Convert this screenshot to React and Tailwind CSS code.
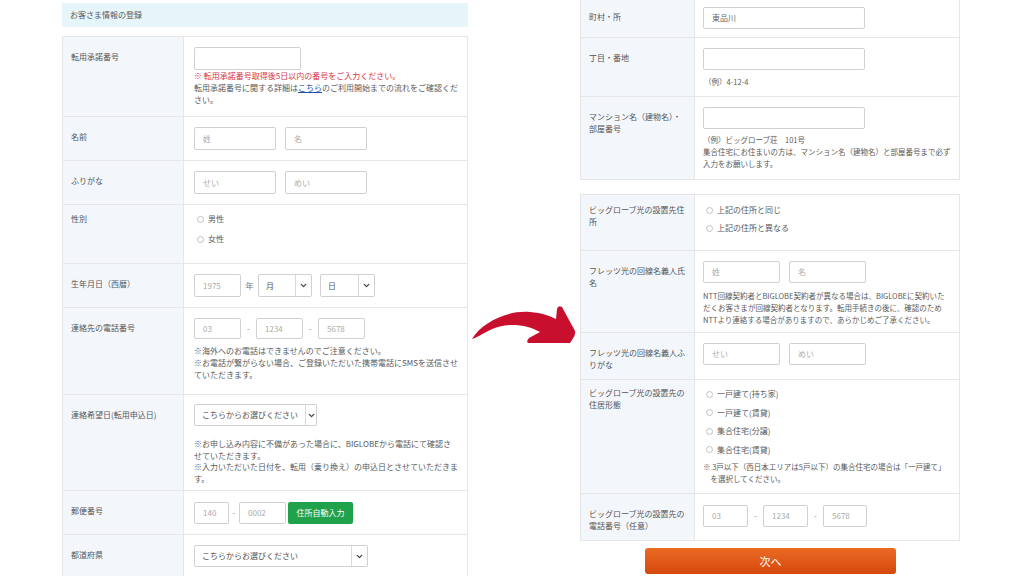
import { ChevronDown } from 'lucide-react'

const FONT = "font-['Noto_Sans_CJK_JP','Noto_Sans',sans-serif]"

function Box({ w, h = 'h-[22px]', children, dark }) {
  return (
    <div
      className={`${w} ${h} shrink-0 border border-[#d0d0d0] rounded-[2px] bg-white flex items-center px-[8px] text-[8px] ${dark ? 'text-[#666]' : 'text-[#ababab]'}`}
    >
      {children}
    </div>
  )
}

function Select({ w, children, h = 'h-[22px]' }) {
  return (
    <div className={`${w} ${h} shrink-0 border border-[#d0d0d0] rounded-[2px] bg-white flex text-[8px] text-[#555]`}>
      <div className="flex-1 flex items-center px-[7px] whitespace-nowrap">{children}</div>
      <div className="w-[16px] border-l border-[#dadada] flex items-center justify-center">
        <ChevronDown size={9} strokeWidth={3.5} className="text-[#444]" />
      </div>
    </div>
  )
}

function Radio({ children, h = 'h-[20px]' }) {
  return (
    <div className={`${h} flex items-center gap-[4px] pl-[3px] text-[8px] text-[#5a5a5a]`}>
      <span className="w-[7px] h-[7px] rounded-full border border-[#c2c2c2] bg-white" />
      <span>{children}</span>
    </div>
  )
}

function Notes({ lines, className = '', leading = 'leading-[12px]', size = 'text-[8px]' }) {
  return (
    <div className={`${size} text-[#5a5a5a] ${leading} ${className}`}>
      {lines.map((l, i) => (
        <div key={i} className="whitespace-nowrap">{l}</div>
      ))}
    </div>
  )
}

function Row({ label, labelPt = 'pt-[14px]', cols, cell, first, children }) {
  return (
    <div className={`grid ${cols} ${first ? '' : 'border-t border-[#e6e6e6]'}`}>
      <div className={`bg-[#f3f7fc] border-r border-[#e6e6e6] ${labelPt} pl-[8px] text-[8px] leading-[12px] text-[#555]`}>
        {label.map((l, i) => (
          <div key={i} className="whitespace-nowrap">{l}</div>
        ))}
      </div>
      <div className={cell}>{children}</div>
    </div>
  )
}

const L = 'grid-cols-[121px_1fr]'
const R = 'grid-cols-[114px_1fr]'

function Dash() {
  return <span className="w-[15px] text-center text-[8px] text-[#888]">-</span>
}

function LeftPanel() {
  return (
    <div className="w-[406px] ml-[62px] pt-[3px] shrink-0">
      <div className="h-[24px] bg-[#e5f5fa] flex items-center px-[8px] text-[8px] text-[#5a5a5a]">お客さま情報の登録</div>
      <div className="mt-[9px] border border-[#e6e6e6] bg-white">
        <Row first cols={L} label={['転用承諾番号']} cell="pl-[10px] pt-[10px] pb-[10px]">
          <Box w="w-[107px]" h="h-[23px]" />
          <div className="text-[8px] leading-[12px]">
            <div className="whitespace-nowrap text-[#d7373f]">※ 転用承諾番号取得後5日以内の番号をご入力ください。</div>
            <div className="whitespace-nowrap text-[#5a5a5a]">
              転用承諾番号に関する詳細は<span className="text-[#1f4fa8] underline">こちら</span>のご利用開始までの流れをご確認くだ
            </div>
            <div className="text-[#5a5a5a]">さい。</div>
          </div>
        </Row>
        <Row cols={L} label={['名前']} cell="pl-[10px] pt-[10px] pb-[10px] flex gap-[9px]">
          <Box w="w-[82px]" h="h-[23px]">姓</Box>
          <Box w="w-[82px]" h="h-[23px]">名</Box>
        </Row>
        <Row cols={L} label={['ふりがな']} cell="pl-[10px] pt-[10px] pb-[10px] flex gap-[9px]">
          <Box w="w-[82px]" h="h-[23px]">せい</Box>
          <Box w="w-[82px]" h="h-[23px]">めい</Box>
        </Row>
        <Row cols={L} label={['性別']} labelPt="pt-[8px]" cell="pl-[10px] pt-[4px] pb-[14px]">
          <Radio>男性</Radio>
          <Radio>女性</Radio>
        </Row>
        <Row cols={L} label={['生年月日（西暦）']} cell="pl-[10px] pt-[10px] pb-[10px] flex items-center">
          <Box w="w-[47px]" h="h-[23px]">1975</Box>
          <span className="w-[17px] text-center text-[8px] text-[#777]">年</span>
          <Select w="w-[54px]" h="h-[23px]">月</Select>
          <span className="w-[8px]" />
          <Select w="w-[55px]" h="h-[23px]">日</Select>
        </Row>
        <Row cols={L} label={['連絡先の電話番号']} cell="pl-[10px] pt-[10px] pb-[13px]">
          <div className="flex items-center">
            <Box w="w-[47px]" h="h-[21px]">03</Box>
            <Dash />
            <Box w="w-[47px]" h="h-[21px]">1234</Box>
            <Dash />
            <Box w="w-[47px]" h="h-[21px]">5678</Box>
          </div>
          <Notes
            className="mt-[6px]"
            lines={[
              '※海外へのお電話はできませんのでご注意ください。',
              '※お電話が繋がらない場合、ご登録いただいた携帯電話にSMSを送信させ',
              'ていただきます。',
            ]}
          />
        </Row>
        <Row cols={L} label={['連絡希望日(転用申込日)']} cell="pl-[10px] pt-[9px] pb-[6px]">
          <Select w="w-[123px]">こちらからお選びください</Select>
          <Notes
            className="mt-[12px]"
            leading="leading-[11.5px]"
            lines={[
              '※お申し込み内容に不備があった場合に、BIGLOBEから電話にて確認さ',
              'せていただきます。',
              '※入力いただいた日付を、転用（乗り換え）の申込日とさせていただきま',
              'す。',
            ]}
          />
        </Row>
        <Row cols={L} label={['郵便番号']} cell="pl-[10px] pt-[11px] pb-[10px] flex items-center">
          <Box w="w-[35px]">140</Box>
          <span className="w-[10px] text-center text-[8px] text-[#888]">-</span>
          <Box w="w-[47px]">0002</Box>
          <div className="ml-[2px] w-[65px] h-[22px] rounded-[2px] bg-[#1fa24b] text-white text-[8px] flex items-center justify-center">
            住所自動入力
          </div>
        </Row>
        <Row cols={L} label={['都道府県']} cell="pl-[10px] pt-[10px] pb-[10px]">
          <Select w="w-[174px]">こちらからお選びください</Select>
        </Row>
      </div>
    </div>
  )
}

function RightPanel() {
  const small = 'text-[7.5px]'
  return (
    <div className="w-[380px] shrink-0">
      <div className="-mt-[5px] border border-[#e6e6e6] bg-white">
        <Row first cols={R} label={['町村・所']} labelPt="pt-[15px]" cell="pl-[8px] pt-[11px] pb-[8px]">
          <Box w="w-[162px]" dark>東品川</Box>
        </Row>
        <Row cols={R} label={['丁目・番地']} cell="pl-[8px] pt-[10px] pb-[8px]">
          <Box w="w-[162px]" />
          <Notes size={small} className="mt-[6px] pl-[1px]" lines={['（例）4-12-4']} />
        </Row>
        <Row cols={R} label={['マンション名（建物名）・', '部屋番号']} cell="pl-[8px] pt-[10px] pb-[9px]">
          <Box w="w-[162px]" />
          <Notes
            size={small}
            className="mt-[5px]"
            lines={[
              '（例）ビッグローブ荘　101号',
              '集合住宅にお住まいの方は、マンション名（建物名）と部屋番号まで必ず',
              '入力をお願いします。',
            ]}
          />
        </Row>
      </div>

      <div className="mt-[14px] border border-[#e6e6e6] bg-white">
        <Row first cols={R} label={['ビッグローブ光の設置先住', '所']} labelPt="pt-[9px]" cell="pl-[8px] pt-[6px] pb-[13px]">
          <Radio h="h-[18px]">上記の住所と同じ</Radio>
          <Radio h="h-[18px]">上記の住所と異なる</Radio>
        </Row>
        <Row cols={R} label={['フレッツ光の回線名義人氏', '名']} cell="pl-[8px] pt-[10px] pb-[6px]">
          <div className="flex gap-[9px]">
            <Box w="w-[77px]">姓</Box>
            <Box w="w-[77px]">名</Box>
          </div>
          <Notes
            size={small}
            className="mt-[7px]"
            lines={[
              'NTT回線契約者とBIGLOBE契約者が異なる場合は、BIGLOBEに契約いた',
              'だくお客さまが回線契約者となります。転用手続きの後に、確認のため',
              'NTTより連絡する場合がありますので、あらかじめご了承ください。',
            ]}
          />
        </Row>
        <Row cols={R} label={['フレッツ光の回線名義人ふ', 'りがな']} cell="pl-[8px] pt-[10px] pb-[14px] flex gap-[9px]">
          <Box w="w-[77px]">せい</Box>
          <Box w="w-[77px]">めい</Box>
        </Row>
        <Row cols={R} label={['ビッグローブ光の設置先の', '住居形態']} labelPt="pt-[7px]" cell="pl-[8px] pt-[5px] pb-[8px]">
          <Radio h="h-[18.5px]">一戸建て(持ち家)</Radio>
          <Radio h="h-[18.5px]">一戸建て(賃貸)</Radio>
          <Radio h="h-[18.5px]">集合住宅(分譲)</Radio>
          <Radio h="h-[18.5px]">集合住宅(賃貸)</Radio>
          <Notes
            size={small}
            className="mt-[2px]"
            lines={[
              '※ 3戸以下（西日本エリアは5戸以下）の集合住宅の場合は「一戸建て」',
              '　を選択してください。',
            ]}
          />
        </Row>
        <Row cols={R} label={['ビッグローブ光の設置先の', '電話番号（任意）']} cell="pl-[8px] pt-[11px] pb-[13px] flex items-center">
          <Box w="w-[45px]">03</Box>
          <Dash />
          <Box w="w-[45px]">1234</Box>
          <Dash />
          <Box w="w-[44px]">5678</Box>
        </Row>
      </div>

      <div className="mt-[7px] ml-[65px] w-[251px] h-[26px] rounded-[3px] bg-gradient-to-b from-[#ec6a24] to-[#d4480c] flex items-center justify-center text-white text-[11px]">
        次へ
      </div>
    </div>
  )
}

function Arrow() {
  return (
    <svg width="112" height="50" viewBox="0 0 112 50" className="mt-[300px]">
      <path
        d="M4,39 C14,22 40,10 62,12 C74,13 82,16 88,19 L89,9 Q90,5 94,7 L107,31 Q108,35 104,40 L102,43 L60,43 Q58,41 61,38 L72,32 C58,24 38,22 22,30 C14,34 8,38 4,39 Z"
        fill="#c8102e"
      />
    </svg>
  )
}

export default function App() {
  return (
    <div className={`w-[1024px] h-[576px] overflow-hidden bg-white flex ${FONT}`}>
      <LeftPanel />
      <div className="w-[112px] shrink-0">
        <Arrow />
      </div>
      <RightPanel />
    </div>
  )
}
